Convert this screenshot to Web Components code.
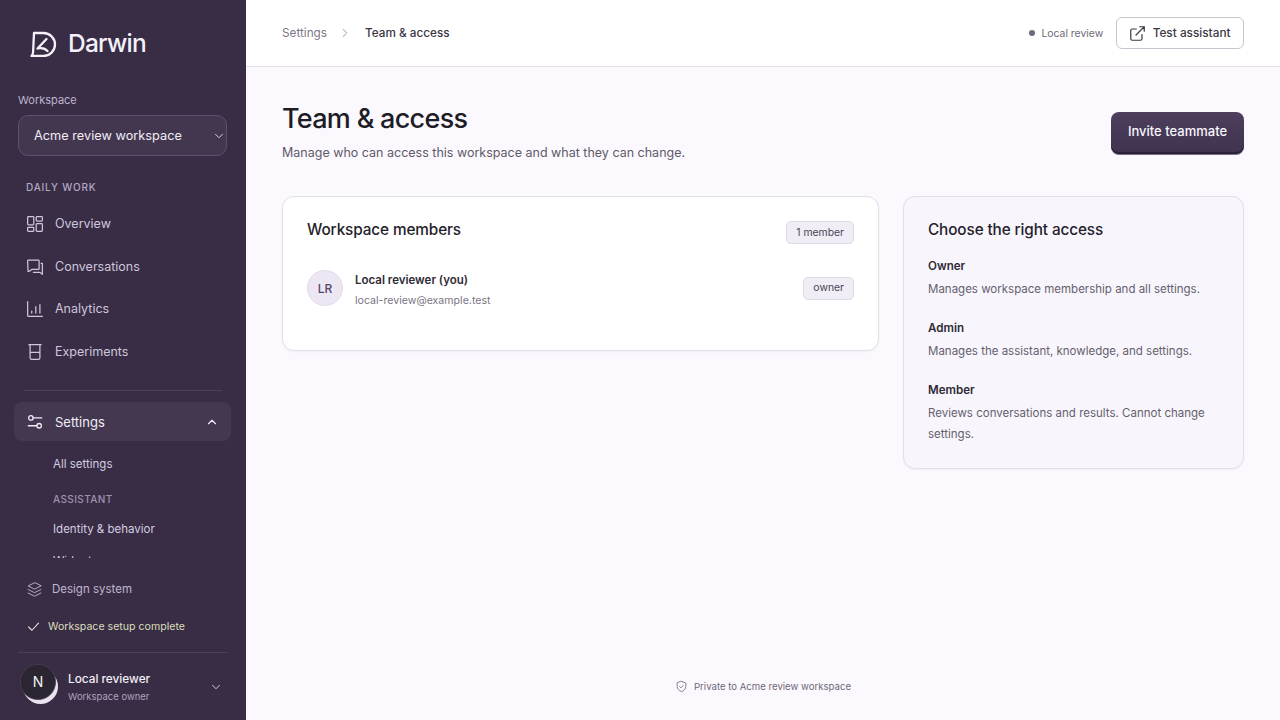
<!DOCTYPE html>
<html lang="en"><head><meta charset="utf-8"><title>Team & access</title>
<style>
html,body{margin:0;height:100%;overflow:hidden;font-family:Inter,"Liberation Sans",sans-serif;background:#fbf9fe}
body{display:flex;height:720px}
</style></head><body>
<app-sidebar></app-sidebar>
<app-main></app-main>
<script>
const I={
overview:'<rect x="3" y="3" width="7.500" height="10" rx="1"/><rect x="13.500" y="3" width="7.500" height="5.500" rx="1"/><rect x="13.500" y="11.500" width="7.500" height="9.500" rx="1"/><rect x="3" y="16" width="7.500" height="5" rx="1"/>',
conv:'<path d="M4 3.500h12a1 1 0 0 1 1 1V14a1 1 0 0 1-1 1H8l-3.500 2.500H3.500L3 4.500a1 1 0 0 1 1-1z"/><path d="M19.500 7.500H21V21l-3-2.500H10"/>',
analytics:'<path d="M3 3v16.500a1.500 1.500 0 0 0 1.500 1.500H21"/><path d="M8 17v-2.500M13 17V9M18 17V6.500"/>',
exp:'<path d="M4.500 3h15M6 3v16a2 2 0 0 0 2 2h8a2 2 0 0 0 2-2V3M6 12.500h12"/>',
settings:'<path d="M9.500 6.500H21M3 17h11.500"/><circle cx="6.500" cy="6.500" r="3"/><circle cx="17.500" cy="17" r="3"/>',
layers:'<path d="M12 2.500 3 7l9 4.500L21 7z"/><path d="m3 12 9 4.500 9-4.500"/><path d="m3 17 9 4.500 9-4.500"/>',
check:'<path d="m4 12.500 5.500 5.500L20 6.500"/>',
down:'<path d="m6 9 6 6 6-6"/>',
up:'<path d="m6 15 6-6 6 6"/>',
right:'<path d="m9 6 6 6-6 6"/>',
ext:'<path d="M18 13.500V19a2 2 0 0 1-2 2H5a2 2 0 0 1-2-2V8a2 2 0 0 1 2-2h5.500"/><path d="M15 3h6v6M10 14 21 3"/>',
shield:'<path d="M12 2.500 20 5.500v6c0 5-3.500 8.500-8 10-4.500-1.500-8-5-8-10v-6z"/><path d="m8.500 12 2.500 2.500 4.500-4.500"/>'
};
const svg=(n,s,w=1.5,vb='0 0 24 24')=>`<svg width="${s}" height="${s}" viewBox="${vb}" fill="none" stroke="currentColor" stroke-width="${w}" stroke-linecap="round" stroke-linejoin="round" aria-hidden="true">${I[n]}</svg>`;
const TIGHT='2 2 20 20';
class Base extends HTMLElement{
  constructor(){super();this.attachShadow({mode:'open'}).innerHTML=this.tpl();}
}
class NavItem extends Base{
  tpl(){return `<style>
  :host{display:flex;align-items:center;gap:11px;height:42.500px;padding-left:12px;color:#cfc6dc;font-size:12.500px;line-height:20px}
  svg{flex:none;display:block}
  </style>${svg(this.getAttribute('icon'),18,1.5,'1 1 22 22')}<slot></slot>`}
}
customElements.define('nav-item',NavItem);
class AppSidebar extends Base{
  tpl(){return `<style>
  :host{display:flex;flex-direction:column;width:246px;flex:none;height:720px;background:#382d45;color:#e9e3f1;overflow:hidden;box-sizing:border-box}
  .brand{display:flex;align-items:center;gap:11px;height:28px;padding:29px 0 0 30px;box-sizing:content-box}
  .brand svg{display:block}
  .brand span{font-size:24.500px;font-weight:500;letter-spacing:-.75px;color:#f5f1fa;line-height:28px}
  .wlabel{margin:36px 0 0 18px;font-size:11px;line-height:14px;color:#bfb3cf}
  .select{margin:8px 19px 0 18px;height:41px;box-sizing:border-box;border:1px solid #5d5070;border-radius:10px;background:#43374f;display:flex;align-items:center;justify-content:space-between;padding:0 0 0 15px;font-size:12.750px;color:#f1ecf6}
  .select svg{display:block;color:#e6dfee}
  .section{margin:25px 0 0 26px;font-size:10px;font-weight:500;letter-spacing:.8px;line-height:13px;color:#b3a7c3}
  .nav{flex:1;min-height:0;overflow:hidden;padding:0 15px 0 14px;margin-top:9px;position:relative}
  .rule{height:1px;background:#4a3e5b;margin:17px 9px 11px 10px}
  .settings{display:flex;align-items:center;height:39px;border-radius:8px;background:#433850;padding:0 12px;gap:11px;font-size:13px;color:#f1ecf6}
  .settings .grow{flex:1}
  .settings svg{display:block;flex:none}
  .sub{padding-left:39px;font-size:11.500px;line-height:16px;color:#d4cce0}
  .subhead{padding-left:39px;font-size:10px;letter-spacing:.4px;line-height:13px;color:#9f92b1;font-weight:500}
  .foot{flex:none;padding-top:21px}
  .row{display:flex;align-items:center}
  .ds{height:20px;gap:9px;padding-left:26px;font-size:11.500px;color:#c0b5cf}
  .ok{height:16px;gap:7px;padding-left:26px;margin-top:19px;font-size:10.600px;color:#dcdcbc}
  .ok svg{color:#e9e6dd}
  .hr{height:1px;background:#4a3e5b;margin:18px 18px 0 18px}
  .user{height:67px;padding-left:20px;gap:10px;color:#fff}
  .avatar{width:38px;height:41px;flex:none;margin-bottom:4px}
  .user .meta{flex:1;padding-top:2px}
  .n{font-size:11.800px;font-weight:500;line-height:16px;color:#f4f0f8}
  .r{font-size:9.500px;line-height:14px;margin-top:3px;color:#aea2be}
  .user svg{display:block;flex:none}
  .user>svg{margin-right:23px;color:#e6dfee}
  </style>
  <div class="brand"><svg width="27" height="27" viewBox="0 0 27 27" fill="none" stroke="#f5f1fa" stroke-width="2.300" stroke-linecap="round" stroke-linejoin="round"><path d="M4 3h9.500A11.500 11.500 0 0 1 25 14.500 11.500 11.500 0 0 1 13.500 26H1.500c1-1 1.500-2.500 1.600-4z"/><path d="M7.500 18.500 16.500 9M7.500 18.500c4-1 7.500-.5 10 2.500"/></svg><span>Darwin</span></div>
  <div class="wlabel">Workspace</div>
  <div class="select"><span>Acme review workspace</span>${svg('down',14,1.5)}</div>
  <div class="section">DAILY WORK</div>
  <div class="nav">
    <nav-item icon="overview">Overview</nav-item>
    <nav-item icon="conv">Conversations</nav-item>
    <nav-item icon="analytics">Analytics</nav-item>
    <nav-item icon="exp">Experiments</nav-item>
    <div class="rule"></div>
    <div class="settings">${svg('settings',18,1.7)}<span class="grow">Settings</span>${svg('up',14,2)}</div>
    <div class="sub" style="margin-top:15px">All settings</div>
    <div class="subhead" style="margin-top:21px">ASSISTANT</div>
    <div class="sub" style="margin-top:15px">Identity &amp; behavior</div>
    <div class="sub" style="margin-top:16px">Widget</div>
  </div>
  <div class="foot">
    <div class="row ds">${svg('layers',17,1.3)}<span>Design system</span></div>
    <div class="row ok">${svg('check',15,1.7)}<span>Workspace setup complete</span></div>
    <div class="hr"></div>
    <div class="row user">
      <div class="avatar"><svg width="38" height="41" viewBox="0 0 38 41"><circle cx="20.500" cy="22.500" r="17.500" fill="#e9e4ef"/><circle cx="18" cy="18" r="17.600" fill="#2a2530" stroke="#4a4352" stroke-width=".8"/><text x="18" y="23" text-anchor="middle" font-family="Inter,sans-serif" font-size="14" font-weight="400" fill="#f4f2f6">N</text></svg></div>
      <div class="meta"><div class="n">Local reviewer</div><div class="r">Workspace owner</div></div>
      ${svg('down',14,1.5)}
    </div>
  </div>`}
}
customElements.define('app-sidebar',AppSidebar);
class UiBadge extends Base{
  tpl(){return `<style>:host{display:inline-flex;align-items:center;height:23px;box-sizing:border-box;padding:1px 9px 0;border:1px solid #e0dae8;border-radius:5px;background:#f1edf6;color:#4c4357;font-size:10.400px;line-height:1}</style><slot></slot>`}
}
customElements.define('ui-badge',UiBadge);
class AccessRole extends Base{
  tpl(){return `<style>:host{display:block}
  .t{font-size:11.600px;font-weight:600;line-height:16px;color:#2f2b36}
  .d{font-size:11.500px;line-height:21px;color:#655f6f;margin-top:5px}
  </style><div class="t">${this.getAttribute('name')}</div><div class="d"><slot></slot></div>`}
}
customElements.define('access-role',AccessRole);
class AppMain extends Base{
  tpl(){return `<style>
  :host{flex:1;min-width:0;display:flex;flex-direction:column;height:720px;color:#25212b}
  .top{flex:none;height:67px;box-sizing:border-box;background:#fff;border-bottom:1px solid #e4e0ea;display:flex;align-items:center;padding:0 36px;}
  .crumbs{display:flex;align-items:center;flex:1;font-size:11.750px}
  .crumbs .a{color:#7d7787}.crumbs svg{margin:0 13px 0 11px;color:#8e8898;display:block}.crumbs .b{color:#3a3541;font-weight:500}
  .status{display:flex;align-items:center;gap:6px;font-size:10.400px;color:#6e6878;margin-right:13px}
  .dot{width:6px;height:6px;border-radius:50%;background:#6e6878}
  .test{display:flex;align-items:center;gap:8px;height:32px;box-sizing:border-box;padding:0 12.500px;background:#fff;border:1px solid #c9c4d0;border-radius:6px;font-size:11.800px;font-weight:500;color:#3d3845}
  .test svg{display:block}
  .body{flex:1;min-height:0;padding:0 36px;display:flex;flex-direction:column}
  .head{display:flex;justify-content:space-between;align-items:flex-start;padding-top:33px}
  h1{margin:1px 0 0;font-size:27px;line-height:36px;font-weight:500;letter-spacing:-.7px;color:#201c26}
  .sub{font-size:12.500px;line-height:18px;margin-top:7px;color:#5f5969}
  .invite{margin-top:12px;width:133px;height:42px;padding-bottom:5px;box-sizing:border-box;border-radius:8px;background:linear-gradient(#4d3f5d,#3f3350);box-shadow:inset 0 -2px 0 #2b2139,0 1px 0 #7a6d88;display:flex;align-items:center;justify-content:center;color:#f8f5fb;font-size:13px;font-weight:500}
  .grid{display:grid;grid-template-columns:597px 341px;gap:24px;margin-top:33.500px;align-items:start}
  .card{box-sizing:border-box;border:1px solid #e2deea;border-radius:12px;box-shadow:0 1px 2px rgba(50,40,70,.05)}
  .members{background:#fff;height:155px;padding:24.500px 24px 0}
  .access{background:#f8f5fc;height:273px;padding:24.500px 24px 0}
  h2{margin:0;font-size:15.300px;font-weight:500;line-height:18px;letter-spacing:-.1px;color:#25212b}
  .hrow{display:flex;justify-content:space-between;align-items:flex-start;height:23px}
  .mem{display:flex;align-items:center;gap:12px;margin-top:24px}
  .av{width:36px;height:36px;border-radius:50%;background:#ece7f3;border:1px solid #e0dae8;box-sizing:border-box;display:flex;align-items:center;justify-content:center;font-size:12px;font-weight:500;color:#57456e;flex:none}
  .info{flex:1;padding-top:4px}
  .nm{font-size:11.500px;font-weight:600;line-height:16px;color:#2f2b36}
  .em{font-size:10.600px;line-height:14px;margin-top:6px;color:#7b7585}
  access-role{margin-top:20px}
  access-role.f{margin-top:14px}
  .foot{flex:none;height:67px;display:flex;align-items:center;justify-content:center;gap:6px;font-size:9.600px;color:#6e6878}
  .foot svg{display:block}
  </style>
  <div class="top">
    <div class="crumbs"><span class="a">Settings</span>${svg('right',14,1.5)}<span class="b">Team &amp; access</span></div>
    <div class="status"><span class="dot"></span>Local review</div>
    <div class="test">${svg('ext',15,1.6,TIGHT)}<span>Test assistant</span></div>
  </div>
  <div class="body">
    <div class="head"><div><h1>Team &amp; access</h1><div class="sub">Manage who can access this workspace and what they can change.</div></div><div class="invite">Invite teammate</div></div>
    <div class="grid">
      <div class="card members">
        <div class="hrow"><h2>Workspace members</h2><ui-badge>1 member</ui-badge></div>
        <div class="mem"><div class="av">LR</div><div class="info"><div class="nm">Local reviewer (you)</div><div class="em">local-review@example.test</div></div><ui-badge>owner</ui-badge></div>
      </div>
      <div class="card access">
        <h2 class="hrow">Choose the right access</h2>
        <access-role class="f" name="Owner">Manages workspace membership and all settings.</access-role>
        <access-role name="Admin">Manages the assistant, knowledge, and settings.</access-role>
        <access-role name="Member">Reviews conversations and results. Cannot change settings.</access-role>
      </div>
    </div>
  </div>
  <div class="foot">${svg('shield',13,1.5)}<span>Private to Acme review workspace</span></div>`}
}
customElements.define('app-main',AppMain);
</script>
</body></html>
